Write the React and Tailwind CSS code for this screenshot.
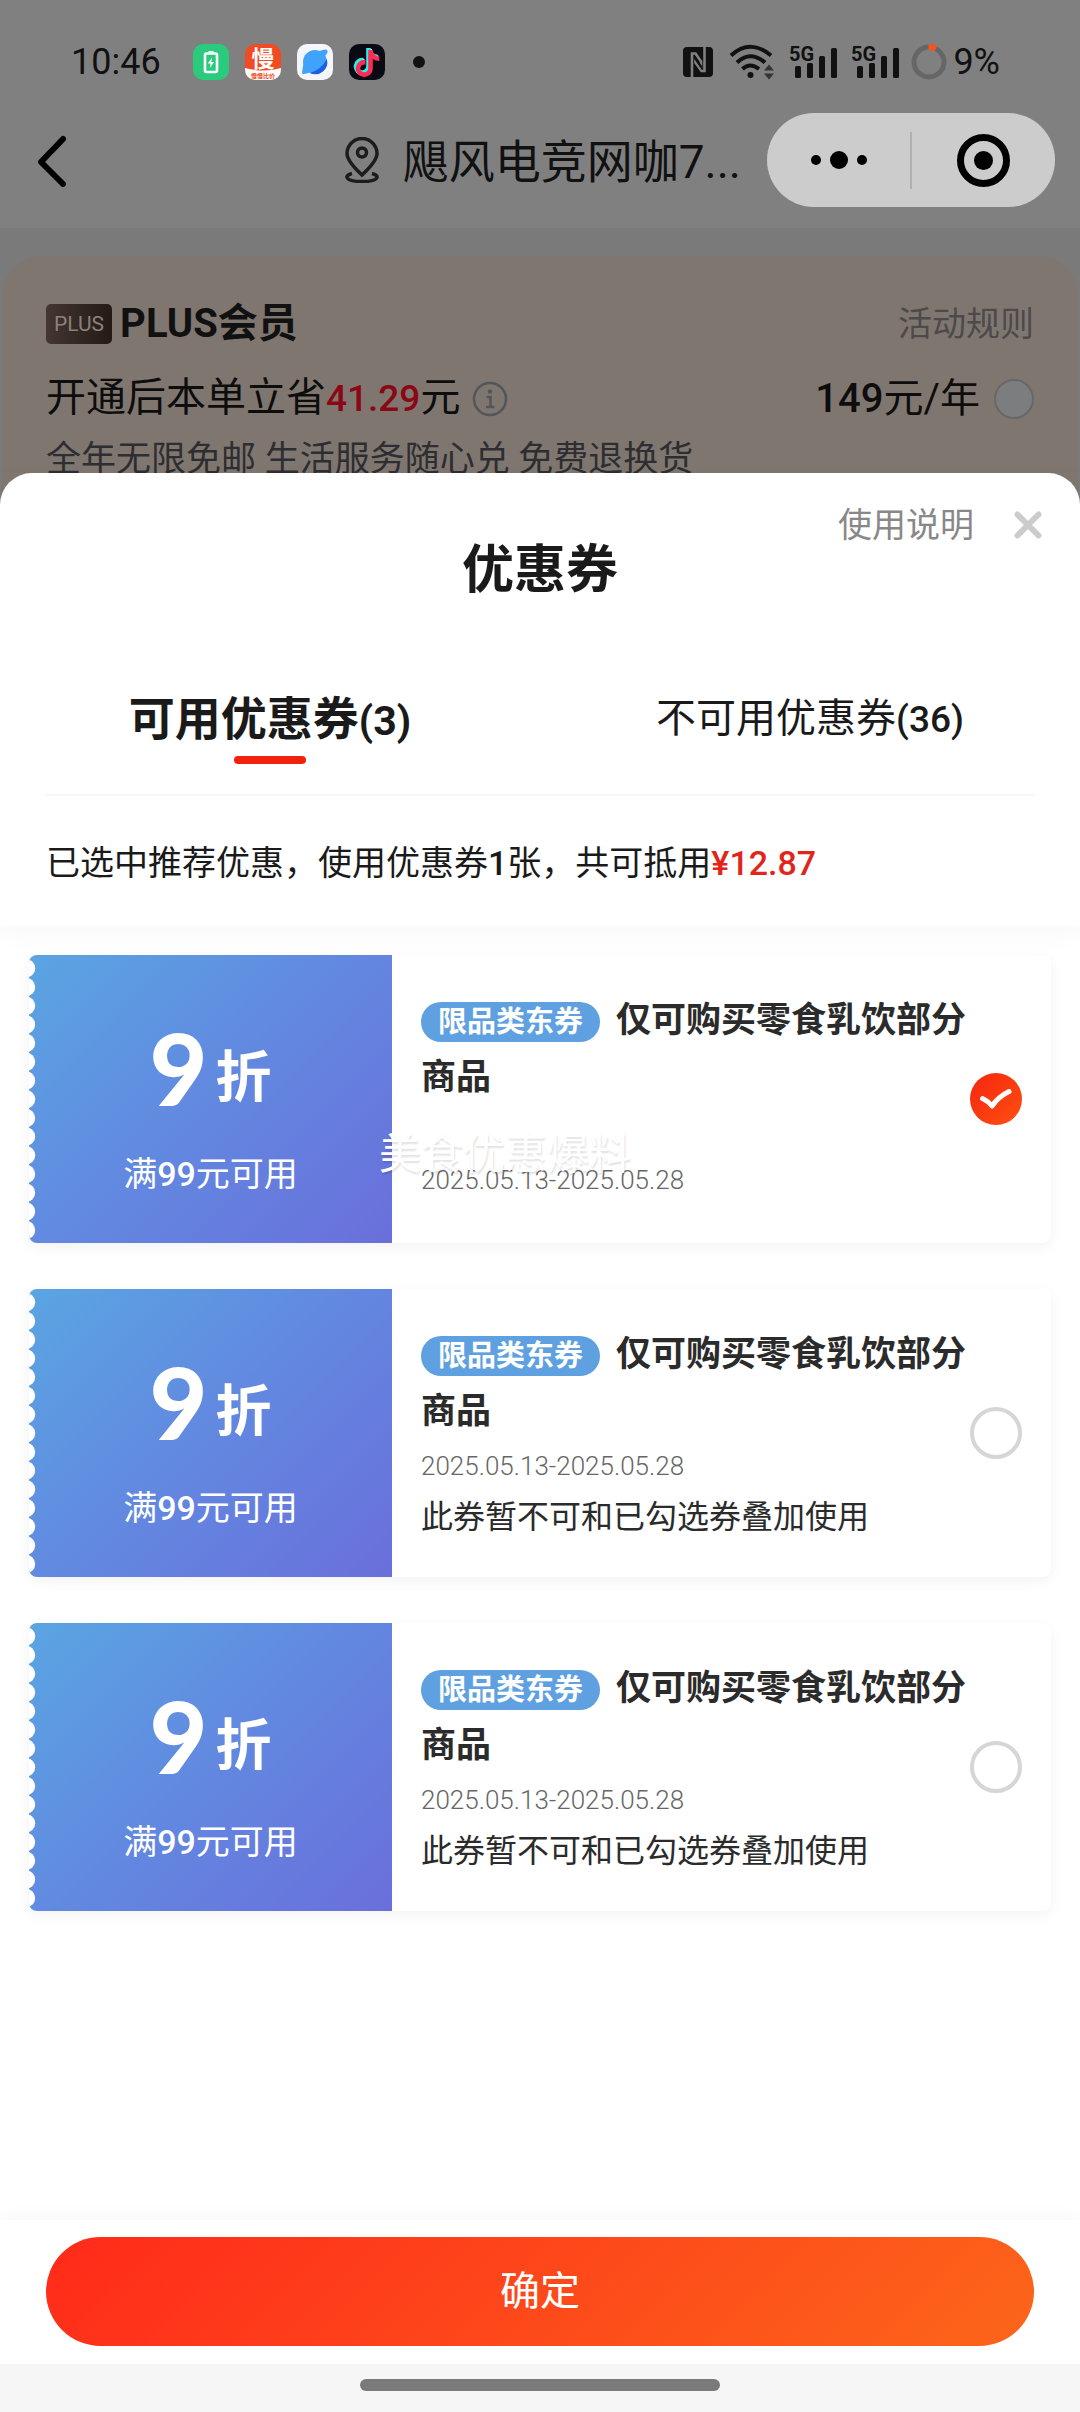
import { useState } from 'react';
import { FaTiktok } from 'react-icons/fa6';

const coupons = [
  { id: 'c1', note: '' },
  { id: 'c2', note: '此券暂不可和已勾选券叠加使用' },
  { id: 'c3', note: '此券暂不可和已勾选券叠加使用' },
];

const notches = Array.from({ length: 15 }, (_, i) => 13.3 + i * 18.7);

function Signal() {
  return (
    <svg viewBox="0 0 46 34" className="h-[34px] w-[46px] overflow-visible" fill="#111">
      <text x="-2" y="16" fontSize="20" fontWeight="700" fontFamily="Roboto, sans-serif">
        5G
      </text>
      <rect x="4" y="21" width="6" height="12" rx="1.5" />
      <rect x="16" y="18" width="6" height="15" rx="1.5" />
      <rect x="28" y="11" width="6" height="22" rx="1.5" />
      <rect x="40" y="3" width="6" height="30" rx="1.5" />
    </svg>
  );
}

function StatusBar() {
  return (
    <div className="flex items-center justify-between pt-[38px] pr-[80px] pl-[71px]">
      <div className="flex h-12 items-center gap-4">
        <span className="mr-4 text-[36px] leading-[48px] text-[#111]">10:46</span>
        <svg viewBox="0 0 36 36" className="size-9">
          <rect width="36" height="36" rx="10" fill="#2acb7c" />
          <rect x="12" y="9.500" width="12" height="18.500" rx="1.500" fill="none" stroke="#fff" strokeWidth="2.600" />
          <rect x="15.500" y="7" width="5" height="3" fill="#fff" />
          <path d="M19 13.500l-4.200 6h2.800l-.8 4.500 4.200-6h-2.800z" fill="#fff" />
        </svg>
        <svg viewBox="0 0 36 36" className="size-9 overflow-visible">
          <rect width="36" height="36" rx="10" fill="#f04b23" />
          <path d="M0 24q18 5 36 0v2a10 10 0 0 1-10 10H10A10 10 0 0 1 0 26z" fill="#fff" />
          <text x="18" y="22.500" fontSize="23" fontWeight="700" textAnchor="middle" fill="#fff" fontFamily="'Noto Sans CJK SC', sans-serif">
            慢
          </text>
          <text x="18" y="34" fontSize="6" fontWeight="700" textAnchor="middle" fill="#f04b23" fontFamily="'Noto Sans CJK SC', sans-serif">
            慢慢比价
          </text>
        </svg>
        <svg viewBox="0 0 36 36" className="size-9">
          <rect width="36" height="36" rx="10" fill="#f4f6f9" />
          <circle cx="18" cy="18" r="12" fill="#3fa3fb" />
          <path d="M29.800 15A12 12 0 0 1 13 29Q25 25 29.800 15z" fill="#1d5fe0" />
          <path d="M22 7q9-3 8.500 0 .5 2-3 5.500zM6.500 20q-2 9-1 10 2 .5 8-2z" fill="#3fa3fb" />
        </svg>
        <div className="grid size-9 place-items-center rounded-[10px] bg-[#0a0a14]">
          <FaTiktok className="col-start-1 row-start-1 size-[27px] -translate-x-px -translate-y-px text-[#25f4ee]" />
          <FaTiktok className="col-start-1 row-start-1 size-[27px] translate-x-px translate-y-px text-[#fe2c55]" />
          <FaTiktok className="col-start-1 row-start-1 size-[27px] text-white" />
        </div>
        <span className="ml-3 size-3 rounded-full bg-[#111]" />
      </div>
      <div className="flex h-12 items-center gap-4">
        <svg viewBox="0 0 30 30" className="size-[30px]">
          <rect width="30" height="30" rx="4" fill="#111" />
          <path d="M9 30V6.500h3.500l5.500 8v6.500" fill="none" stroke="#808080" strokeWidth="2.600" />
          <path d="M21.500 0v24h-3L12.500 15.500v-3" fill="none" stroke="#808080" strokeWidth="2.600" />
          <path d="M12 9l7 10v4l-7-10z" fill="#111" />
        </svg>
        <svg viewBox="0 0 46 36" className="h-9 w-[46px]" fill="none" stroke="#111" strokeWidth="4">
          <path d="M2 11.500Q21-6 42 11.500M8 18.500Q21 6 36 18.500M13.500 25Q21 18 30 25" />
          <circle cx="21.500" cy="31" r="3" fill="#111" stroke="none" />
          <path d="M35 26.500l5-6 5 6zM35 29.500l5 6 5-6z" fill="#333" stroke="none" />
        </svg>
        <Signal />
        <Signal />
        <div className="-ml-1 flex items-center gap-[6px]">
          <svg viewBox="0 0 36 36" className="size-9" fill="none" strokeWidth="5">
            <circle cx="18" cy="18" r="15" stroke="#666" />
            <path d="M17.500 3q4.500 0 7.500 1.700" stroke="#f4551f" strokeWidth="6" />
          </svg>
          <span className="text-[36px] leading-[48px] text-[#111]">9%</span>
        </div>
      </div>
    </div>
  );
}

function NavBar() {
  return (
    <div className="mt-[27px] flex items-center pr-[25px] pl-9 pb-[21px]">
      <button type="button" aria-label="返回">
        <svg viewBox="0 0 32 54" className="h-[54px] w-8" fill="none" stroke="#000" strokeWidth="6" strokeLinecap="round" strokeLinejoin="round">
          <path d="M27 6L5 29l22 22" />
        </svg>
      </button>
      <div className="mr-[26px] flex flex-1 items-center justify-end gap-6">
        <svg viewBox="0 0 34 46" className="h-[46px] w-[34px]" fill="none" stroke="#1c1c1c" strokeWidth="3.500">
          <path d="M17 38Q2 24 2 16.500a15 15 0 0 1 30 0Q32 24 17 38z" />
          <circle cx="17" cy="15.500" r="4.500" />
          <path d="M7 36.500c-4 1-5.500 2.500-5 4 1 3 8 4 15 4s14-1 15-4c.5-1.500-1-3-5-4" />
        </svg>
        <h1 className="pt-1 text-[46px] leading-[60px] text-[#111]">飓风电竞网咖7...</h1>
      </div>
      <div className="flex h-[94px] w-[288px] items-center rounded-full bg-[#ccc]">
        <button type="button" aria-label="更多" className="flex h-full flex-1 items-center justify-center gap-[9px]">
          <span className="size-[10px] rounded-full bg-black" />
          <span className="size-[18px] rounded-full bg-black" />
          <span className="size-[10px] rounded-full bg-black" />
        </button>
        <span className="h-[57px] w-[2px] bg-[#b0b0b0]" />
        <button type="button" aria-label="关闭" className="flex h-full flex-1 items-center justify-center">
          <span className="flex size-[53px] items-center justify-center rounded-full border-[7px] border-black">
            <span className="size-[19px] rounded-full bg-black" />
          </span>
        </button>
      </div>
    </div>
  );
}

function PlusCard() {
  return (
    <div className="mx-[2px] rounded-t-[40px] bg-[#807670] px-11 pt-12 pb-[30px]">
      <div className="flex h-10 items-center justify-between">
        <div className="flex items-center gap-2">
          <span className="rounded-[5px] bg-linear-to-r from-[#443630] to-[#241a16] px-2 text-[21px] leading-[40px] text-[#8b817b]">
            PLUS
          </span>
          <h2 className="text-[40px] font-bold text-[#111]">PLUS会员</h2>
        </div>
        <a href="#rules" className="text-[34px] text-[#4c4a4b]">
          活动规则
        </a>
      </div>
      <div className="mt-[26px] flex items-center justify-between text-[40px] leading-[56px] text-[#0d0d0d]">
        <div className="flex items-center gap-3">
          <p>
            开通后本单立省<span className="text-[37px] font-medium text-[#8a0715]">41.29</span>元
          </p>
          <svg viewBox="0 0 36 36" className="size-9" fill="none" stroke="#52555a" strokeWidth="2.500">
            <circle cx="18" cy="18" r="16" />
            <path d="M14.500 16h4v9.500M14 26h8.500" />
            <circle cx="18" cy="10.500" r="2.200" fill="#52555a" stroke="none" />
          </svg>
        </div>
        <label className="flex items-center gap-[14px]">
          <span>
            <span className="font-medium">149</span>元/年
          </span>
          <input type="radio" className="size-10 appearance-none rounded-full border-2 border-[#66686a] bg-[#7c7d7e]" />
        </label>
      </div>
      <p className="mt-[9px] text-[35px] leading-[48px] text-[#2d2e31]">全年无限免邮 生活服务随心兑 免费退换货</p>
    </div>
  );
}

function Coupon({ note, checked, onChange }) {
  return (
    <label className="flex min-h-[288px] rounded-lg bg-white shadow-[0_4px_14px_rgba(0,0,0,0.05)]">
      <div className="relative flex w-[363px] shrink-0 flex-col items-center overflow-hidden rounded-l-lg bg-linear-[135deg] from-[#5aa5e2] via-[#6288e0] to-[#6a6fdb] text-white">
        <svg className="absolute top-0 left-0 h-[288px] w-2" viewBox="0 0 8 288" fill="#fff">
          {notches.map((y) => (
            <circle key={y} cx="-3" cy={y} r="9.200" />
          ))}
        </svg>
        <div className="mt-14 flex items-end gap-2 font-bold">
          <span className="font-[Lato] text-[100px] leading-[112px] font-black">9</span>
          <span className="text-[56px] leading-[90px]">折</span>
        </div>
        <p className="mt-[27px] text-[34px] leading-[48px]">
          满<span className="font-medium">99</span>元可用
        </p>
      </div>
      <div className="min-w-0 flex-1 pt-[37px] pl-[29px]">
        <div className="text-[35px] leading-[57px] font-bold text-[#2b2b2b]">
          <span className="mr-4 inline-block rounded-full bg-[#5fa1e0] px-[17px] text-[29px] leading-[40px] text-white">
            限品类东券
          </span>
          仅可购买零食乳饮部分商品
        </div>
        <p className={`text-[26px] leading-[36px] font-light text-[#666] ${note ? 'mt-2' : 'mt-14'}`}>2025.05.13-2025.05.28</p>
        {note && <p className="mt-[11px] text-[32px] leading-[44px] text-[#2b2b2b]">{note}</p>}
      </div>
      <div className="mr-[29px] grid place-items-center">
        <input
          type="checkbox"
          checked={checked}
          onChange={onChange}
          className="peer col-start-1 row-start-1 size-[52px] appearance-none rounded-full border-4 border-[#d6d6d6] checked:border-0 checked:bg-linear-[135deg] checked:from-[#f5250f] checked:to-[#ff5010]"
        />
        <svg viewBox="0 0 52 52" className="pointer-events-none col-start-1 row-start-1 size-[52px] opacity-0 peer-checked:opacity-100" fill="none" stroke="#fff" strokeWidth="5" strokeLinecap="round" strokeLinejoin="round">
          <path d="M12.500 25.500Q18 28 22 33 28 24 39 18.500" />
        </svg>
      </div>
    </label>
  );
}

export default function App() {
  const [selected, setSelected] = useState(['c1']);

  const toggle = (id) => {
    setSelected(selected.includes(id) ? selected.filter((item) => item !== id) : [...selected, id]);
  };

  return (
    <div className="flex min-h-screen flex-col bg-[#7a7a7a] font-[Roboto,'Noto_Sans_CJK_SC',sans-serif]">
      <header className="bg-[#808080]">
        <StatusBar />
        <NavBar />
      </header>

      <div className="pt-7">
        <PlusCard />
      </div>

      <section className="relative -mt-[41px] flex flex-1 flex-col rounded-t-[32px] bg-white">
        <div className="relative px-[46px] pt-7 shadow-[0_8px_24px_rgba(0,0,0,0.03)]">
          <div className="-mr-2 flex h-12 items-center justify-end gap-10">
            <a href="#help" className="text-[34px] text-[#888]">
              使用说明
            </a>
            <button type="button" aria-label="关闭优惠券">
              <svg viewBox="0 0 28 28" className="size-7" stroke="#ccc" strokeWidth="6" strokeLinecap="round">
                <path d="M3.500 3.500l21 21M24.500 3.500l-21 21" />
              </svg>
            </button>
          </div>
          <h2 className="-mt-2 text-center text-[52px] leading-[60px] font-bold text-[#1a1a1a]">优惠券</h2>
          <div className="-mx-[46px] mt-[88px] flex pb-[30px] leading-[60px] text-[#1a1a1a]">
            <button type="button" className="flex flex-1 flex-col items-center gap-[5px] text-[46px] font-bold">
              <span>
                可用优惠券<span className="text-[41px]">(3)</span>
              </span>
              <span className="h-2 w-[72px] rounded-full bg-[#f2210e]" />
            </button>
            <button type="button" className="flex flex-1 flex-col items-center text-[40px]">
              <span>
                不可用优惠券<span className="text-[37px] font-medium">(36)</span>
              </span>
            </button>
          </div>
          <p className="border-t-2 border-[#f6f6f6] pt-[43px] pb-[39px] text-[34px] leading-[48px] text-[#1a1a1a]">
            已选中推荐优惠，使用优惠券<span className="font-medium">1</span>张，共可抵用
            <span className="font-medium text-[#e1251b]">¥12.87</span>
          </p>
        </div>

        <div className="relative flex flex-1 flex-col gap-[46px] px-[29px] pt-[29px] pb-12">
          {coupons.map(({ id, note }) => (
            <Coupon key={id} note={note} checked={selected.includes(id)} onChange={() => toggle(id)} />
          ))}
          <span className="pointer-events-none absolute top-[201px] left-[379px] text-[42px] leading-[56px] text-white [text-shadow:1px_2px_2px_rgba(0,0,0,0.12)]">
            美食优惠爆料
          </span>
        </div>

        <div className="bg-white px-[46px] pt-[17px] pb-[18px] shadow-[0_-4px_16px_rgba(0,0,0,0.03)]">
          <button type="button" className="h-[109px] w-full rounded-full bg-linear-[135deg] from-[#ff2a1a] to-[#fc661a] text-[40px] text-white">
            确定
          </button>
        </div>
        <div className="flex h-12 items-start justify-center bg-[#f6f6f6] pt-[15px]">
          <span className="h-3 w-1/3 rounded-full bg-[#7a7a7a]" />
        </div>
      </section>
    </div>
  );
}
